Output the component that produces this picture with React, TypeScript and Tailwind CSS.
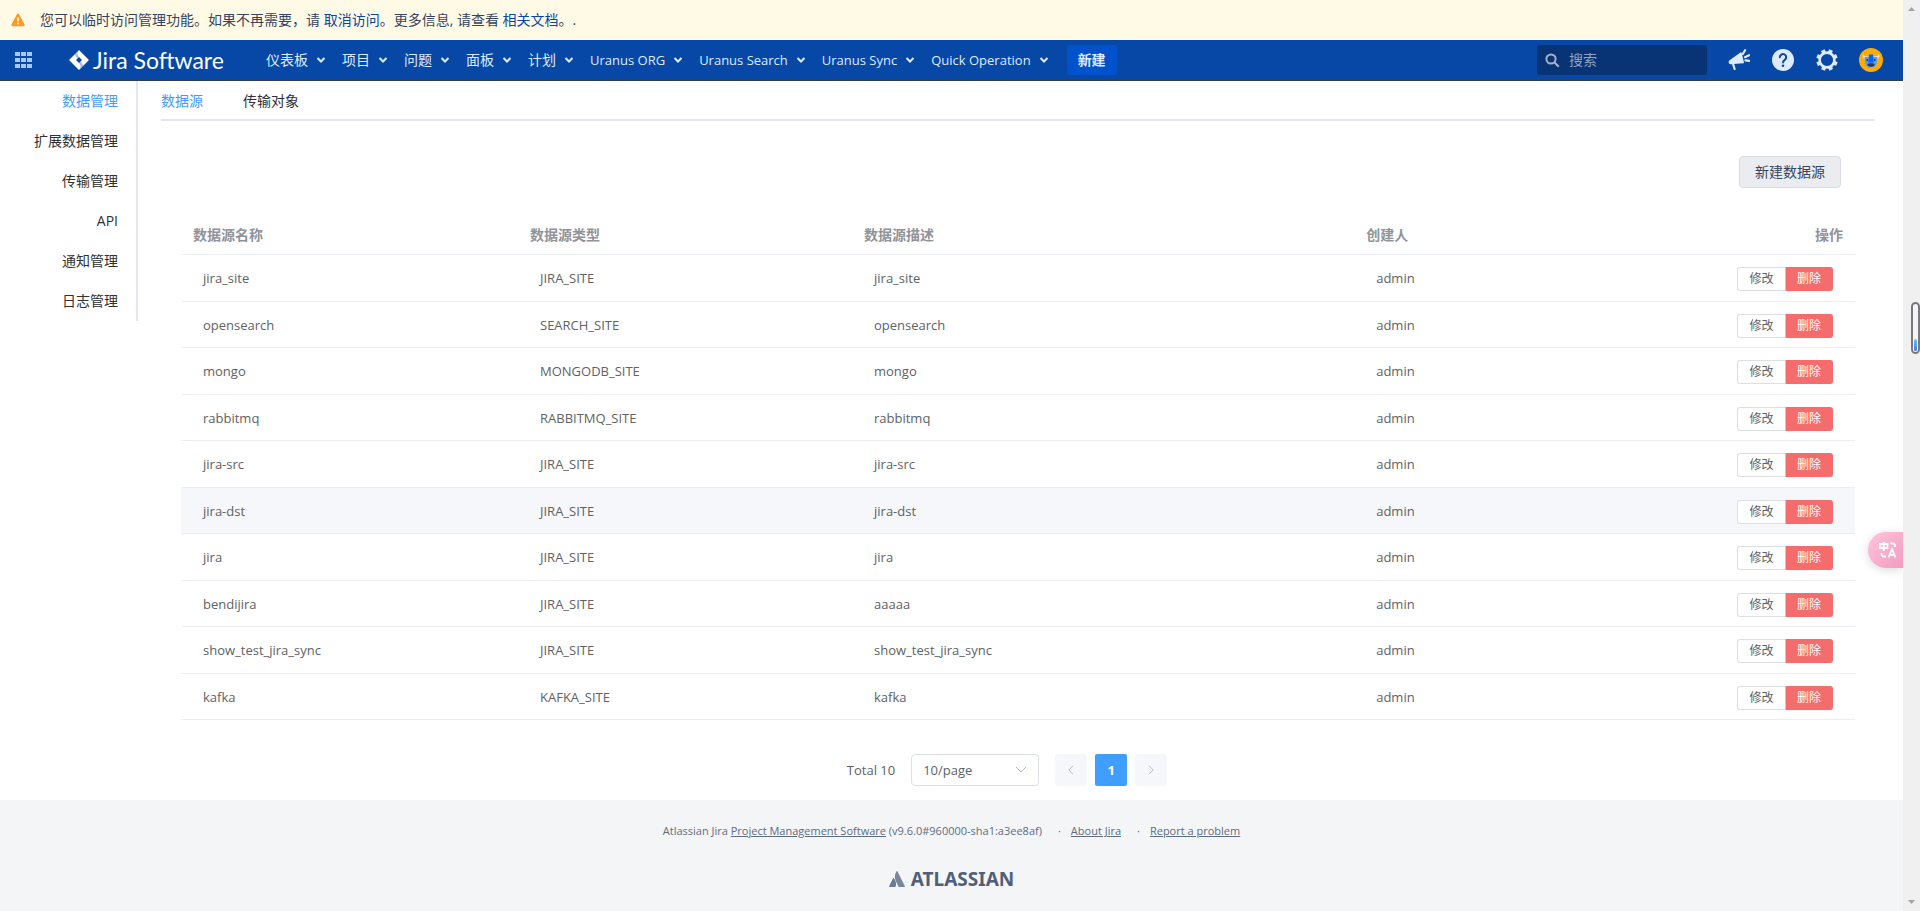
import clsx from 'clsx';

interface NavEntry {
  label: string;
  latin?: boolean;
}

interface Source {
  name: string;
  type: string;
  desc: string;
  creator: string;
}

const NAV: NavEntry[] = [
  { label: '仪表板' },
  { label: '项目' },
  { label: '问题' },
  { label: '面板' },
  { label: '计划' },
  { label: 'Uranus ORG', latin: true },
  { label: 'Uranus Search', latin: true },
  { label: 'Uranus Sync', latin: true },
  { label: 'Quick Operation', latin: true },
];

const SIDE = ['数据管理', '扩展数据管理', '传输管理', 'API', '通知管理', '日志管理'];

const SOURCES: Source[] = [
  { name: 'jira_site', type: 'JIRA_SITE', desc: 'jira_site', creator: 'admin' },
  { name: 'opensearch', type: 'SEARCH_SITE', desc: 'opensearch', creator: 'admin' },
  { name: 'mongo', type: 'MONGODB_SITE', desc: 'mongo', creator: 'admin' },
  { name: 'rabbitmq', type: 'RABBITMQ_SITE', desc: 'rabbitmq', creator: 'admin' },
  { name: 'jira-src', type: 'JIRA_SITE', desc: 'jira-src', creator: 'admin' },
  { name: 'jira-dst', type: 'JIRA_SITE', desc: 'jira-dst', creator: 'admin' },
  { name: 'jira', type: 'JIRA_SITE', desc: 'jira', creator: 'admin' },
  { name: 'bendijira', type: 'JIRA_SITE', desc: 'aaaaa', creator: 'admin' },
  { name: 'show_test_jira_sync', type: 'JIRA_SITE', desc: 'show_test_jira_sync', creator: 'admin' },
  { name: 'kafka', type: 'KAFKA_SITE', desc: 'kafka', creator: 'admin' },
];

const ACTIVE_ROW = 'jira-dst';

export default function App() {
  return (
    <div className="flex min-h-screen bg-white font-['Open_Sans','Noto_Sans_CJK_SC',sans-serif] text-[14px] leading-5 text-[#303133]">
      <div className="relative flex min-w-0 flex-1 flex-col">
        <Banner />
        <Header />
        <div className="flex">
          <SideNav />
          <main className="min-w-0 flex-1 pr-7 pl-[23px]">
            <Tabs />
            <div className="mt-[35px] flex justify-end pr-[34px]">
              <button type="button" className="h-8 w-[102px] rounded border border-[#d9dce2] bg-[#ebecf0] text-[#344563]">
                新建数据源
              </button>
            </div>
            <SourceTable />
            <Pagination />
          </main>
        </div>
        <Footer />
        <TranslateButton />
      </div>
      <ScrollTrack />
    </div>
  );
}

function Banner() {
  return (
    <div className="flex h-10 shrink-0 items-center bg-[#fffae6] pl-[11px] text-[#344563]">
      <svg width="14" height="14" viewBox="0 0 14 14" aria-hidden="true">
        <path d="M7 .6c.5 0 .9.3 1.2.8l5.2 9.8c.6 1.1 0 2.1-1.2 2.1H1.8C.6 13.300 0 12.300.6 11.200L5.800 1.400C6.100.9 6.500.6 7 .6z" fill="#ff991f" />
        <rect x="6.100" y="4.300" width="1.800" height="4.200" rx=".9" fill="#fffae6" />
        <circle cx="7" cy="10.500" r="1.100" fill="#fffae6" />
      </svg>
      <p className="ml-[15px]">
        您可以临时访问管理功能。如果不再需要，请 <a href="#drop" className="text-[#0747a6]">取消访问</a>。更多信息, 请查看{' '}
        <a href="#docs" className="text-[#0747a6]">相关文档</a>。.
      </p>
    </div>
  );
}

function Header() {
  return (
    <header className="flex h-[41px] shrink-0 items-center border-b border-[#2e3d54] bg-[#0747a6] text-[#deebff]">
      <button type="button" aria-label="应用" className="ml-[15px]">
        <svg width="17" height="16" viewBox="0 0 17 16" fill="#a9c5f5">
          {[0, 6, 12].map((y) => [0, 6, 12].map((x) => <rect key={`${x}-${y}`} x={x} y={y} width="5" height="4" />))}
        </svg>
      </button>
      <a href="#home" className="ml-[37px] flex w-[157px] items-center gap-1 text-white">
        <JiraMark />
        <span className="font-['Lato'] text-[23px] leading-6 whitespace-nowrap">Jira Software</span>
      </a>
      <nav className="ml-10 flex items-center">
        {NAV.map((n) => (
          <button key={n.label} type="button" className="flex h-[30px] items-center gap-2 pr-4 whitespace-nowrap">
            <span className={clsx(n.latin && 'text-[13px]')}>{n.label}</span>
            <svg width="10" height="8" viewBox="0 0 10 8" fill="none" stroke="currentColor" strokeWidth="2" aria-hidden="true">
              <path d="M1.500 2 5 5.500 8.500 2" />
            </svg>
          </button>
        ))}
        <button type="button" className="ml-0.5 h-[30px] w-[50px] rounded-[3px] bg-[#0052cc] font-bold">
          新建
        </button>
      </nav>
      <div className="mr-5 ml-auto flex items-center">
        <label className="flex h-[30px] w-[170px] items-center rounded-[3px] bg-[#083374] pl-2">
          <svg width="15" height="15" viewBox="0 0 15 15" fill="none" stroke="#a5b3c9" strokeWidth="2" aria-hidden="true">
            <circle cx="6" cy="6" r="4.600" />
            <path d="m9.500 9.500 4.300 4.300" />
          </svg>
          <input aria-label="搜索" placeholder="搜索" className="ml-[9px] w-[120px] bg-transparent outline-none placeholder:text-[#91a2bf]" />
        </label>
        <button type="button" aria-label="反馈" className="ml-[21px]">
          <svg width="22" height="22" viewBox="0 0 22 22" fill="#deebff">
            <path d="M1.200 11.600 12.400 3.400c.5-.4 1-.2 1.200.4l2.400 9.600c.1.600-.2.900-.7.900l-13 .9C.8 15.200 0 12.600 1.200 11.600z" />
            <path d="m5.200 15.500 1.400 4.500M14.800 5l2.300-3.800M17 8.200l4-2M17.500 11.300l4 .6" fill="none" stroke="#deebff" strokeWidth="2.200" strokeLinecap="round" />
          </svg>
        </button>
        <button type="button" aria-label="帮助" className="ml-[22px]">
          <svg width="22" height="22" viewBox="0 0 22 22">
            <circle cx="11" cy="11" r="11" fill="#deebff" />
            <path d="M7.800 8.300a3.200 3.200 0 1 1 5 2.600c-1.200.8-1.800 1.300-1.800 2.700" fill="none" stroke="#0747a6" strokeWidth="2" strokeLinecap="round" />
            <circle cx="11" cy="16.700" r="1.300" fill="#0747a6" />
          </svg>
        </button>
        <button type="button" aria-label="管理" className="ml-[22px]">
          <svg width="22" height="22" viewBox="0 0 22 22" fill="none" stroke="#deebff">
            <circle cx="11" cy="11" r="7.400" strokeWidth="2.600" />
            {[22, 67, 112, 157, 202, 247, 292, 337].map((a) => (
              <path key={a} d="M11 .3v3" strokeWidth="4" transform={`rotate(${a} 11 11)`} />
            ))}
          </svg>
        </button>
        <button type="button" aria-label="用户" className="ml-[21px]">
          <svg width="24" height="24" viewBox="0 0 24 24">
            <circle cx="12" cy="12" r="12" fill="#ffab00" />
            <path d="M4.500 6c.3 1.800 1.300 2.500 3 2.500h9c1.700 0 2.700-.7 3-2.500l1 1.500c0 2-1.300 3-3 3.200h-11c-1.700-.2-3-1.200-3-3.200z" fill="#deebff" />
            <path d="M5.500 9h13l-.8 6.500c-.4 2.500-2.600 4-5.700 4s-5.300-1.500-5.700-4z" fill="#5c9bf5" />
            <path d="M10 6.500h4l.6 8H9.400z" fill="#0065ff" />
            <path d="M8.500 16c1-1 6-1 7 0 .6 1.700-1.200 2.700-3.500 2.700s-4.100-1-3.500-2.700z" fill="#253858" />
            <circle cx="8.300" cy="12" r=".9" fill="#253858" />
            <circle cx="15.700" cy="12" r=".9" fill="#253858" />
          </svg>
        </button>
      </div>
    </header>
  );
}

function JiraMark() {
  return (
    <svg width="20" height="20" viewBox="0 0 20 20" aria-hidden="true">
      <path d="M10 0 19.500 9.400a.9.900 0 0 1 0 1.200L10 20 .5 10.600a.9.900 0 0 1 0-1.200zM10 7 7 10l3 3 3-3z" fill="#fff" fillRule="evenodd" />
      <path d="M10 7C8 5 8 2.500 10 .2L5.500 4.600 8.400 8.600z" fill="#0747a6" fillOpacity=".35" />
      <path d="M10 13c2 2 2 4.500 0 6.800l4.500-4.400-2.900-4z" fill="#0747a6" fillOpacity=".35" />
    </svg>
  );
}

function SideNav() {
  return (
    <nav className="w-[138px] shrink-0 self-start border-r-2 border-[#e4e7ed]">
      {SIDE.map((s, i) => (
        <a
          key={s}
          href={`#side-${i}`}
          className={clsx('flex h-10 items-center justify-end pr-[18px]', i === 0 && 'text-[#409eff]')}
        >
          {s}
        </a>
      ))}
    </nav>
  );
}

function Tabs() {
  return (
    <div className="flex h-10 items-center gap-10 border-b-2 border-[#e4e7ed] pt-0.5">
      <a href="#sources" className="text-[#409eff]">数据源</a>
      <a href="#objects">传输对象</a>
    </div>
  );
}

function SourceTable() {
  return (
    <div className="mt-7 px-5">
      <table className="w-full table-fixed border-separate border-spacing-0 text-left">
        <thead>
          <tr className="text-[#909399] [&>th]:h-[39px] [&>th]:border-b [&>th]:border-[#ebeef5] [&>th]:px-3">
            <th className="w-[337px]">数据源名称</th>
            <th className="w-[334px]">数据源类型</th>
            <th className="w-[30%]">数据源描述</th>
            <th>创建人</th>
            <th className="text-right">操作</th>
          </tr>
        </thead>
        <tbody className="text-[13px] text-[#606266]">
          {SOURCES.map((s) => (
            <tr
              key={s.name}
              className={clsx(
                'odd:h-[47px] even:h-[46px] [&>td]:border-b [&>td]:border-[#ebeef5] [&>td]:px-[22px]',
                s.name === ACTIVE_ROW && 'bg-[#f5f7fa]',
              )}
            >
              <td>{s.name}</td>
              <td>{s.type}</td>
              <td>{s.desc}</td>
              <td>{s.creator}</td>
              <td className="pt-0.5">
                <div className="flex justify-end text-[12px]">
                  <button type="button" className="h-6 w-12 rounded-l-[3px] border border-r-0 border-[#dcdfe6] bg-white">
                    修改
                  </button>
                  <button type="button" className="h-6 w-12 rounded-r-[3px] border border-[#f56c6c] border-l-[#fab6b6] bg-[#f56c6c] text-white">
                    删除
                  </button>
                </div>
              </td>
            </tr>
          ))}
        </tbody>
      </table>
    </div>
  );
}

function Pagination() {
  return (
    <div className="mt-[34px] mb-[14px] flex items-center justify-center pr-[22px] text-[13px] text-[#606266]">
      <span>Total 10</span>
      <div className="relative ml-4">
        <select aria-label="每页条数" className="h-8 w-32 appearance-none rounded border border-[#dcdfe6] bg-white pl-[11px]">
          <option>10/page</option>
        </select>
        <svg className="pointer-events-none absolute top-3 right-3" width="12" height="8" viewBox="0 0 12 8" fill="none" stroke="#b4b8bf" aria-hidden="true">
          <path d="m1 1 5 5 5-5" />
        </svg>
      </div>
      <button type="button" aria-label="上一页" className="ml-4 flex size-8 items-center justify-center rounded-sm bg-[#f5f7fa]">
        <svg width="8" height="10" viewBox="0 0 8 10" fill="none" stroke="#b4b8bf">
          <path d="M6 .8 1.800 5 6 9.200" />
        </svg>
      </button>
      <button type="button" className="ml-2 size-8 rounded-xs bg-[#409eff] font-bold text-white">1</button>
      <button type="button" aria-label="下一页" className="ml-2 flex size-8 items-center justify-center rounded-sm bg-[#f5f7fa]">
        <svg width="8" height="10" viewBox="0 0 8 10" fill="none" stroke="#b4b8bf">
          <path d="M2 .8 6.200 5 2 9.200" />
        </svg>
      </button>
    </div>
  );
}

function Footer() {
  return (
    <footer className="flex flex-1 flex-col items-center bg-[#f4f5f7] pt-[21px] text-[11px] text-[#5e6c84]">
      <ul className="flex">
        <li>
          Atlassian Jira <a href="#pm" className="underline">Project Management Software</a> (v9.6.0#960000-sha1:a3ee8af)
        </li>
        <li className="before:mr-[10px] before:ml-4 before:content-['·']">
          <a href="#about" className="underline">About Jira</a>
        </li>
        <li className="before:mr-[10px] before:ml-4 before:content-['·']">
          <a href="#report" className="underline">Report a problem</a>
        </li>
      </ul>
      <a href="#atlassian" className="mt-[26px] flex items-center gap-[6px] font-['Noto_Sans'] text-[19px] leading-6 font-bold text-[#505f79]">
        <svg width="16" height="16" viewBox="0 0 16 16" aria-hidden="true">
          <path d="M4.700 7.300c-.3-.3-.6-.2-.8.1L.1 15.200c-.2.400.100.800.5.800H6c.2 0 .4-.1.500-.3 1.200-2.400.5-6.200-1.800-8.400z" fill="#6b7a93" />
          <path d="M7.600.3C5.400 3.700 5.500 7.500 7 10.400l2.600 5.300c.1.200.3.300.5.300h5.300c.4 0 .7-.4.500-.8L8.400.3c-.1-.4-.6-.4-.8 0z" fill="#7a869a" />
        </svg>
        ATLASSIAN
      </a>
    </footer>
  );
}

/* Floating tab of the translate extension, stuck to the right edge */
function TranslateButton() {
  return (
    <button
      type="button"
      aria-label="翻译"
      className="absolute top-[532px] right-0 flex h-9 w-[35px] items-center justify-center rounded-l-full bg-linear-to-br from-[#ffc4dc] to-[#f29cc0] pl-1 shadow-[0_2px_10px_rgba(0,0,0,0.15)]"
    >
      <svg width="18" height="18" viewBox="0 0 18 18" fill="none" stroke="#fff" strokeWidth="1.800">
        <path d="M1 3h7.500v4H1zM4.750 1v9M11.500 2.500h2a2.500 2.500 0 0 1 2.500 2.500v1M2.500 12v1A2.500 2.500 0 0 0 5 15.500h2M9.500 16.500l3.500-8.500 3.500 8.500M10.500 14h5" />
      </svg>
    </button>
  );
}

function ScrollTrack() {
  return (
    <div className="relative flex w-[17px] shrink-0 flex-col items-center justify-between bg-[#f0f0f0] py-[7px]" aria-hidden="true">
      <svg width="7" height="4" viewBox="0 0 7 4" fill="#a3a3a3">
        <path d="M3.500 0 7 4H0z" />
      </svg>
      <svg width="7" height="4" viewBox="0 0 7 4" fill="#a3a3a3">
        <path d="M0 0h7L3.500 4z" />
      </svg>
      <div className="absolute top-[302px] right-0 flex h-[52px] w-[9px] items-end rounded-full border-2 border-[#77797c] bg-[#f5f5f5] p-px">
        <div className="h-3 w-full rounded-sm bg-linear-to-b from-[#7db9f5] to-[#2f80ed]" />
      </div>
    </div>
  );
}
